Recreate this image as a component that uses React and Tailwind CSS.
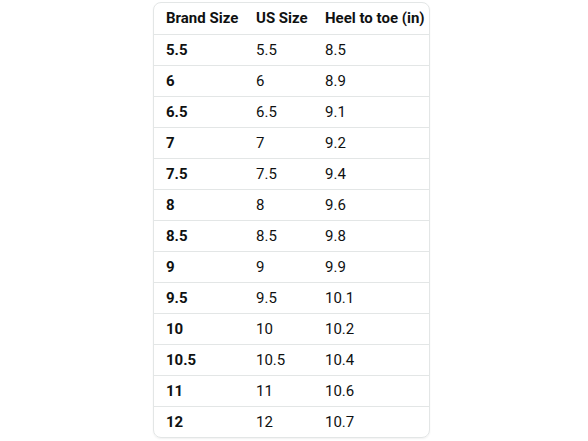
const rows = [
  ['5.5', '5.5', '8.5'],
  ['6', '6', '8.9'],
  ['6.5', '6.5', '9.1'],
  ['7', '7', '9.2'],
  ['7.5', '7.5', '9.4'],
  ['8', '8', '9.6'],
  ['8.5', '8.5', '9.8'],
  ['9', '9', '9.9'],
  ['9.5', '9.5', '10.1'],
  ['10', '10', '10.2'],
  ['10.5', '10.5', '10.4'],
  ['11', '11', '10.6'],
  ['12', '12', '10.7'],
];

export default function App() {
  return (
    <div className="w-[588px] h-[441px] bg-white pt-[2px] pl-[153px]" style={{ fontFamily: 'Roboto, "Noto Sans", sans-serif' }}>
      <div className="w-[277px] rounded-lg border border-[#e3e6e6] overflow-hidden shadow-[0_1px_2px_rgba(0,0,0,0.06)] text-[15px] text-[#0f1111]">
        <div className="flex h-[31px] items-center font-bold">
          <div className="w-[90px] pl-3">Brand Size</div>
          <div className="w-[69px] pl-3">US Size</div>
          <div className="flex-1 pl-3">Heel to toe (in)</div>
        </div>
        {rows.map((r) => (
          <div key={r[0]} className="flex h-[31px] items-center border-t border-[#e3e6e6]">
            <div className="w-[90px] pl-3 font-bold">{r[0]}</div>
            <div className="w-[69px] pl-3">{r[1]}</div>
            <div className="flex-1 pl-3">{r[2]}</div>
          </div>
        ))}
      </div>
    </div>
  );
}
